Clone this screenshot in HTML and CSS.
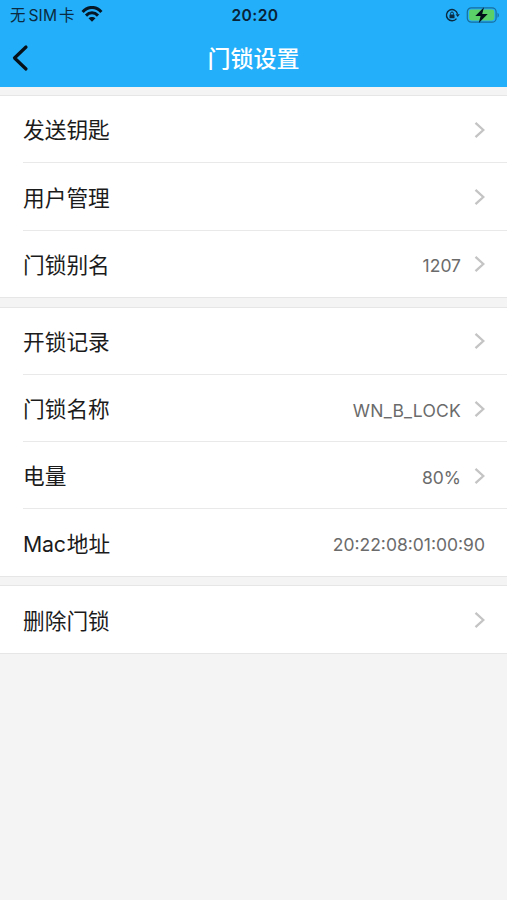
FILE: index.html
```
<!DOCTYPE html>
<html lang="zh-CN">
<head>
<meta charset="utf-8">
<title>门锁设置</title>
<link rel="stylesheet" href="styles.css">
</head>
<body>
<svg class="defs" aria-hidden="true">
  <symbol id="chevron" viewBox="0 0 12 18"><path d="M1.500 1.8 9.300 9 1.500 16.2" fill="none" stroke="currentColor" stroke-width="2.3"/></symbol>
</svg>
<header class="header">
  <div class="status">
    <div class="carrier">
      <span class="cjk">无</span><span class="sim">SIM</span><span class="cjk">卡</span>
      <svg class="wifi" viewBox="0 0 22 16"><g fill="none" stroke="#061826" stroke-width="3"><path d="M1.6 5.9C7-.1 15-.1 20.4 5.9"/><path d="M5 9.6c3.6-3.7 8.400-3.700 12 0"/></g><path d="M11 15.700 7.500 12.300c1.900-1.800 5.100-1.800 7 0z" fill="#061826"/></svg>
    </div>
    <div class="clock">20:20</div>
    <div class="indicators">
      <svg class="rotation" viewBox="0 0 15 14"><path d="M11.500 10.600A5.600 5.600 0 1 1 12.500 5.800" fill="none" stroke="#0a2b40" stroke-width="1.400"/><path d="M10.600 6.200h4.200l-2.100 2.900z" fill="#0a2b40"/><rect x="4.500" y="6.400" width="5" height="3.800" rx=".5" fill="#0a2b40"/><path d="M5.600 6.700V5.400a1.400 1.400 0 0 1 2.800 0v1.300" fill="none" stroke="#0a2b40"/></svg>
      <svg class="battery" viewBox="0 0 34 18"><rect x="1.300" y="1.800" width="28.800" height="14.400" rx="4" fill="none" stroke="#176f9e" stroke-width="1.200"/><rect x="3.100" y="3.600" width="25.200" height="10.800" rx="2.400" fill="#5bd068"/><path d="M31.500 6.700c1.800.7 1.800 4.300 0 5z" fill="#176f9e"/><path d="M18 1.200 9.300 9.900h5.300L12.800 17.100 21.700 8h-5.500z" fill="#03101a"/></svg>
    </div>
  </div>
  <div class="nav">
    <svg class="back" viewBox="0 0 18 28"><path d="M15 3 3.500 14 15 25" fill="none" stroke="#061018" stroke-width="3.200" stroke-linecap="round" stroke-linejoin="round"/></svg>
    <h1 class="title">门锁设置</h1>
    <span></span>
  </div>
</header>
<main class="groups">
  <section class="group">
    <div class="row"><span class="label">发送钥匙</span><svg class="chevron"><use href="#chevron"/></svg></div>
    <div class="row"><span class="label">用户管理</span><svg class="chevron"><use href="#chevron"/></svg></div>
    <div class="row"><span class="label">门锁别名</span><span class="value">1207</span><svg class="chevron"><use href="#chevron"/></svg></div>
  </section>
  <section class="group">
    <div class="row"><span class="label">开锁记录</span><svg class="chevron"><use href="#chevron"/></svg></div>
    <div class="row"><span class="label">门锁名称</span><span class="value name">WN_B_LOCK</span><svg class="chevron"><use href="#chevron"/></svg></div>
    <div class="row"><span class="label">电量</span><span class="value">80%</span><svg class="chevron"><use href="#chevron"/></svg></div>
    <div class="row"><span class="label"><span class="latin">Mac</span>地址</span><span class="value mac">20:22:08:01:00:90</span></div>
  </section>
  <section class="group">
    <div class="row"><span class="label">删除门锁</span><svg class="chevron"><use href="#chevron"/></svg></div>
  </section>
</main>
</body>
</html>
```
FILE: styles.css
```
* { box-sizing: border-box; }
body {
  margin: 0;
  min-height: 100vh;
  background: #f4f4f4;
  color: #1b1b1b;
  font-family: Inter, "Noto Sans CJK SC", sans-serif;
}
.defs { display: none; }
svg { display: block; flex: none; }
.header { height: 87px; background: #24affa; }
.status, .nav {
  display: grid;
  grid-template-columns: 1fr auto 1fr;
  align-items: center;
}
.status { height: 30px; padding: 0 7px 0 10px; color: #0a2b40; }
.carrier { display: flex; align-items: center; padding-top: 1px; font-size: 15px; line-height: 29px; }
.cjk { font-size: 15.5px; }
.sim { margin: 0 2px 0 3px; font-size: 15.6px; letter-spacing: .1px; }
.wifi { width: 22px; height: 16px; margin: -3px 0 0 6px; }
.clock { font-size: 15.6px; font-weight: 600; letter-spacing: .4px; color: #082236; }
.indicators { display: flex; align-items: center; justify-content: flex-end; gap: 6px; }
.rotation { width: 15px; height: 14px; }
.battery { width: 34px; height: 18px; margin-top: -1px; }
.nav { height: 57px; padding: 1px 13px 0; }
.back { width: 18px; height: 28px; margin: -3px 0 0 -2px; }
.title { margin: 0; font-size: 23px; line-height: 32px; font-weight: 500; color: #fff; }
.groups { display: flex; flex-direction: column; gap: 8.8px; padding-top: 8px; }
.group {
  background: #fff;
  border: solid #e6e6e6;
  border-width: 1px 0;
  padding-left: 23px;
}
.row {
  display: flex;
  align-items: center;
  height: 67.2px;
  padding: 2.4px 21px 0 0;
}
.row:first-child { height: 66.4px; }
.row + .row { border-top: 1px solid #e9e9e9; }
.label { flex: 1; font-size: 21.7px; line-height: 32px; }
.latin { margin-right: 1px; font-size: 21.3px; letter-spacing: -.2px; }
.value { margin-top: 3px; font-size: 17.5px; line-height: 24px; color: #6b6b6b; }
.name { letter-spacing: .2px; }
.mac { margin-right: 1px; }
.chevron { width: 12px; height: 18px; margin: -1px 0 0 13px; color: #c4c4c4; }
```
